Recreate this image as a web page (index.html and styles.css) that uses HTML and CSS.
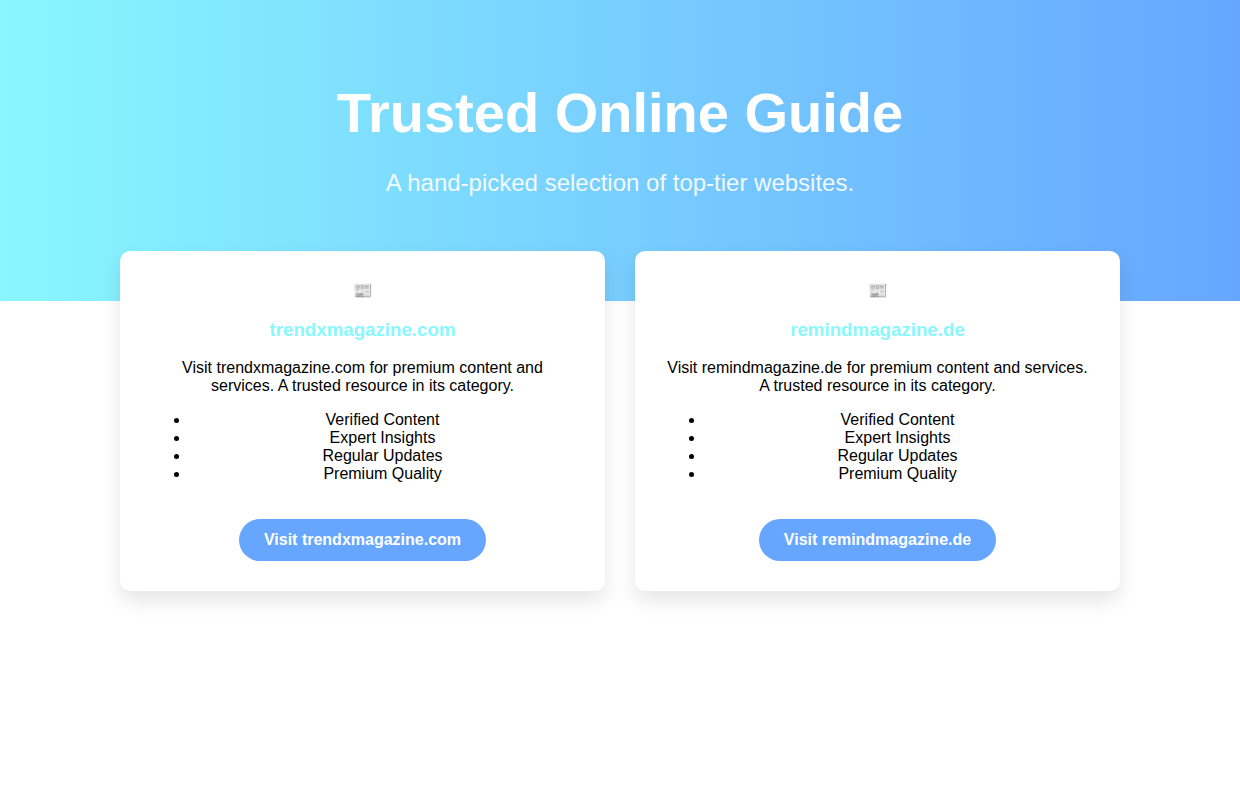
FILE: index.html
```html
<!DOCTYPE html>
<html lang="en">

<head>
    <meta charset="UTF-8">
    <meta name="viewport" content="width=device-width, initial-scale=1.0">
    <title>Trusted Online Guide</title>
    <link rel="stylesheet" href="styles.css">
</head>

<body>

    <header class="hero">
        <h1>Trusted Online Guide</h1>
        <p>A hand-picked selection of top-tier websites.</p>
    </header>

    <main class="cards">
        <div class="card">
            <div class="icon">📰</div>
            <h3>trendxmagazine.com</h3>
            <p>Visit trendxmagazine.com for premium content and services. A trusted resource in its category.</p>
            <ul>
                <li>Verified Content</li>
                <li>Expert Insights</li>
                <li>Regular Updates</li>
                <li>Premium Quality</li>
            </ul>
            <a href="https://trendxmagazine.com" class="btn">Visit trendxmagazine.com</a>
        </div>
        <div class="card">
            <div class="icon">📰</div>
            <h3>remindmagazine.de</h3>
            <p>Visit remindmagazine.de for premium content and services. A trusted resource in its category.</p>
            <ul>
                <li>Verified Content</li>
                <li>Expert Insights</li>
                <li>Regular Updates</li>
                <li>Premium Quality</li>
            </ul>
            <a href="https://remindmagazine.de" class="btn">Visit remindmagazine.de</a>
        </div>
    </main>

</body>

</html>
```
FILE: styles.css
```css
body {
    font-family: "Liberation Sans", Arial, sans-serif;
    margin: 0;
    background: #fff;
}

.hero {
    background: linear-gradient(to right, #89f7fe, #66a6ff);
    color: white;
    text-align: center;
    padding: 80px 20px;
}

.hero h1 {
    font-size: 56px;
    margin: 0;
}

.hero p {
    font-size: 24px;
    margin: 24px 0;
    opacity: 0.9;
}

.cards {
    display: grid;
    grid-template-columns: repeat(auto-fit, minmax(300px, 1fr));
    gap: 30px;
    max-width: 1000px;
    margin: -50px auto 50px;
    padding: 0 20px;
}

.card {
    background: white;
    border-radius: 10px;
    padding: 30px;
    text-align: center;
    box-shadow: 0 10px 20px rgba(0, 0, 0, 0.1);
}

.card h3 {
    color: #89f7fe;
}

.btn {
    display: inline-block;
    background: #66a6ff;
    color: white;
    padding: 12px 25px;
    border-radius: 30px;
    text-decoration: none;
    font-weight: bold;
    margin-top: 20px;
}
```
